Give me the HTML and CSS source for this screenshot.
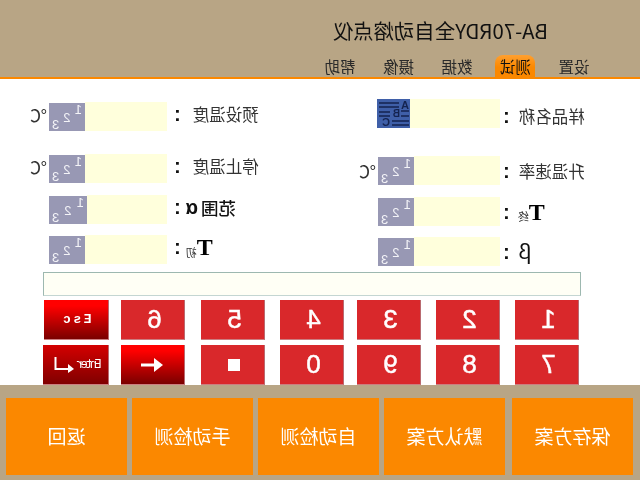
FILE: index.html
```html
<!DOCTYPE html>
<html lang="zh-CN">
<head>
    <meta charset="UTF-8">
    <title>BA-70RDY全自动熔点仪</title>
    <link rel="stylesheet" href="styles.css">
</head>
<body>

    <!-- the whole panel is shown mirrored left to right -->
    <div class="screen">
        <header class="top">
            <h1 class="title">BA-70RDY全自动熔点仪</h1>
            <nav class="tabs">
                <span class="tab">设置</span>
                <span class="tab tab-active">测试</span>
                <span class="tab">数据</span>
                <span class="tab">摄像</span>
                <span class="tab">帮助</span>
            </nav>
        </header>

        <main class="main">
            <div class="form-row row-1">
                <div class="field">
                    <label class="label label-low">样品名称<span class="colon">:</span></label>
                    <div class="input input-name"></div>
                    <div class="abc-btn">
                        <svg width="33" height="29" viewBox="0 0 33 29">
                            <g fill="#14234f" font-family="Liberation Sans" font-weight="bold">
                                <text x="1" y="10" font-size="11">A</text>
                                <text x="10" y="18" font-size="10">B</text>
                                <text x="20" y="27" font-size="11">C</text>
                            </g>
                            <path d="M11 4H31M11 8H31M1 12H9M20 13H31M20 17H31M1 17H9M1 22H18M1 26H18" stroke="#14234f" stroke-width="1.4"/>
                        </svg>
                    </div>
                </div>
                <div class="field field-right nudge-3">
                    <label class="label">预设温度<span class="colon">:</span></label>
                    <div class="input"></div>
                    <div class="num-btn"><i>1</i><i>2</i><i>3</i></div>
                    <span class="unit">℃</span>
                </div>
            </div>

            <div class="form-row row-2">
                <div class="field nudge-2">
                    <label class="label">升温速率<span class="colon">:</span></label>
                    <div class="input"></div>
                    <div class="num-btn"><i>1</i><i>2</i><i>3</i></div>
                    <span class="unit">℃</span>
                </div>
                <div class="field field-right">
                    <label class="label">停止温度<span class="colon">:</span></label>
                    <div class="input"></div>
                    <div class="num-btn"><i>1</i><i>2</i><i>3</i></div>
                    <span class="unit">℃</span>
                </div>
            </div>

            <div class="form-row row-3">
                <div class="field nudge-2">
                    <label class="label"><b class="sym">T</b><small class="sub">终</small><span class="colon">:</span></label>
                    <div class="input"></div>
                    <div class="num-btn"><i>1</i><i>2</i><i>3</i></div>
                </div>
                <div class="field field-right">
                    <label class="label label-dark">范围<span class="alpha">α</span><span class="colon">:</span></label>
                    <div class="input"></div>
                    <div class="num-btn"><i>1</i><i>2</i><i>3</i></div>
                </div>
            </div>

            <div class="form-row row-4">
                <div class="field nudge-2">
                    <label class="label"><span class="beta">β</span><span class="colon">:</span></label>
                    <div class="input"></div>
                    <div class="num-btn"><i>1</i><i>2</i><i>3</i></div>
                </div>
                <div class="field field-right">
                    <label class="label"><b class="sym">T</b><small class="sub">初</small><span class="colon">:</span></label>
                    <div class="input"></div>
                    <div class="num-btn"><i>1</i><i>2</i><i>3</i></div>
                </div>
            </div>

            <div class="status"></div>

            <div class="keypad">
                <button class="key">1</button>
                <button class="key">2</button>
                <button class="key">3</button>
                <button class="key">4</button>
                <button class="key">5</button>
                <button class="key">6</button>
                <button class="key key-hot key-esc">Esc</button>
                <button class="key">7</button>
                <button class="key">8</button>
                <button class="key">9</button>
                <button class="key">0</button>
                <button class="key"><span class="stop"></span></button>
                <button class="key key-hot">
                    <svg width="24" height="16" viewBox="0 0 24 16"><path d="M23 8H8" stroke="#fff" stroke-width="3"/><path d="M10 1L1 8L10 15Z" fill="#fff"/></svg>
                </button>
                <button class="key key-enter">
                    <span class="enter-text">Enter</span>
                    <svg width="21" height="16" viewBox="0 0 21 16"><path d="M19.5 0V12H6" fill="none" stroke="#fff" stroke-width="2"/><path d="M7 7L1 12L7 16Z" fill="#fff"/></svg>
                </button>
            </div>
        </main>

        <footer class="bottom">
            <button class="action action-first">保存方案</button>
            <button class="action">默认方案</button>
            <button class="action">自动检测</button>
            <button class="action">手动检测</button>
            <button class="action">返回</button>
        </footer>
    </div>

</body>
</html>
```

FILE: styles.css
```css
body {
    margin: 0;
    font-family: "Noto Sans CJK SC", "Liberation Sans", sans-serif;
    background: #fff;
}

.screen {
    width: 640px;
    height: 480px;
    overflow: hidden;
    display: flex;
    flex-direction: column;
    transform: scaleX(-1);
}

/* top bar */
.top {
    flex: none;
    padding-top: 18px;
    height: 59px;
    background: #b8a585;
    border-bottom: 2px solid #fb8800;
}

.title {
    margin: 0 0 0 92px;
    height: 24px;
    line-height: 24px;
    font-size: 20.4px;
    font-weight: normal;
    color: #111;
    white-space: nowrap;
}

.tabs {
    display: flex;
    gap: 18.5px;
    margin-top: 13px;
    padding-left: 46px;
}

.tab {
    width: 40px;
    height: 22px;
    line-height: 22px;
    text-align: center;
    font-size: 15.5px;
    color: #2a2a2a;
}

.tab-active {
    background: linear-gradient(#ffa030, #fb8800 55%);
    border-radius: 8px 8px 0 0;
    color: #111;
}

/* form */
.main {
    flex: 1;
    padding-top: 20px;
}

.form-row {
    display: grid;
    grid-template-columns: 333px 1fr;
    padding-left: 40px;
    align-items: start;
}

.row-2 { margin-top: 23px; }
.row-3 { margin-top: 10px; }
.row-4 { margin-top: 9px; }

.nudge-2 { margin-top: 2px; }
.nudge-3 { margin-top: 3px; }

.field {
    display: flex;
    align-items: center;
    height: 29px;
}

.label {
    width: 97px;
    margin-right: 3px;
    display: flex;
    justify-content: flex-end;
    align-items: center;
    font-size: 16.5px;
    color: #333;
    white-space: nowrap;
}

.label-low {
    margin-top: 4px;
}

.field-right .label {
    width: 93px;
    margin-right: 7px;
    margin-bottom: 5px;
}

.field-right .colon {
    margin-left: 12px;
}

.label-dark {
    color: #111;
    font-size: 17.5px;
    font-weight: 500;
}

.colon {
    margin-left: 9px;
    font-family: "Liberation Sans", sans-serif;
    font-size: 20px;
    font-weight: bold;
    line-height: 1;
    color: #111;
}

.field-right .alpha + .colon {
    margin-left: 5px;
}

.alpha {
    margin-left: 3px;
    font-family: "Liberation Sans", sans-serif;
    font-size: 20px;
    font-weight: bold;
    line-height: 1;
}

.sym {
    font-family: "Liberation Serif", serif;
    font-size: 24px;
    line-height: 1;
    color: #000;
}

.sub {
    font-size: 11px;
    margin-top: 9px;
}

.sub + .colon {
    margin-left: 8px;
}

.field-right .sub + .colon {
    margin-left: 5px;
}

.beta {
    font-family: "Liberation Sans", sans-serif;
    font-size: 22px;
    line-height: 1;
    color: #111;
}

.input {
    width: 86px;
    height: 29px;
    background: #ffffdc;
}

.field-right .input {
    width: 82px;
}

.input-name {
    width: 90px;
}

.num-btn {
    width: 36px;
    height: 28px;
    display: flex;
    justify-content: space-between;
    padding: 0 3px;
    box-sizing: border-box;
    background: #9898b4;
}

.row-3 .field-right .input {
    width: 80px;
}

.row-3 .field-right .num-btn {
    width: 38px;
}

.num-btn i {
    font-family: "Liberation Sans", sans-serif;
    font-style: normal;
    font-size: 13px;
    line-height: 13px;
    color: #f4f4f8;
}

.num-btn i:nth-child(2) {
    margin-top: 8px;
}

.num-btn i:nth-child(3) {
    margin-top: 15px;
}

.abc-btn {
    width: 33px;
    height: 29px;
    background: #3f5fa8;
}

.unit {
    margin-left: 2px;
    font-size: 17px;
    color: #333;
}

.field-right .unit {
    margin-bottom: 4px;
}

.status {
    margin: 6px 43px 0 59px;
    height: 22px;
    background: #fffff5;
    border: 1px solid #9db8b0;
    border-bottom-color: #c4d6d2;
}

/* keypad */
.keypad {
    display: grid;
    grid-template-columns: 79px 79px 77px 79px 80px 76px 65px;
    grid-auto-rows: 40px;
    row-gap: 5px;
    margin-top: 4px;
    padding-left: 61px;
}

.key {
    width: 64px;
    height: 40px;
    padding: 0 4px 0 0;
    box-sizing: border-box;
    display: flex;
    align-items: center;
    justify-content: center;
    gap: 3px;
    border: none;
    border-left: 1px solid #b96a70;
    border-bottom: 1px solid #cc7d80;
    background: #d9282b;
    color: #fff;
    font-family: "Liberation Sans", sans-serif;
    font-size: 26px;
    -webkit-text-stroke: 0.5px #fff;
}

.key-hot {
    padding: 0;
    background: linear-gradient(#ff0000 15%, #7a0000);
}

.key-esc {
    width: 65px;
    font-family: "Liberation Mono", monospace;
    font-size: 13px;
    font-weight: bold;
    letter-spacing: 2.5px;
    -webkit-text-stroke: 0;
}

.key-enter {
    width: 66px;
    padding: 0 5px 0 0;
    background: linear-gradient(#d40000, #800000);
}

.enter-text {
    font-family: "Liberation Mono", monospace;
    font-size: 12px;
    letter-spacing: -2.6px;
    -webkit-text-stroke: 0;
}

.stop {
    width: 12px;
    height: 12px;
    background: #fff;
}

/* bottom actions */
.bottom {
    height: 82px;
    flex: none;
    display: flex;
    gap: 5px;
    padding: 13px 6px 5px 7px;
    background: #b8a585;
}

.action {
    width: 121px;
    height: 77px;
    padding: 0 0 2px;
    border: none;
    background: #fb8800;
    color: #fff;
    font-family: "Noto Sans CJK SC", sans-serif;
    font-size: 19px;
}

.action-first {
    margin-right: 2px;
}
```
